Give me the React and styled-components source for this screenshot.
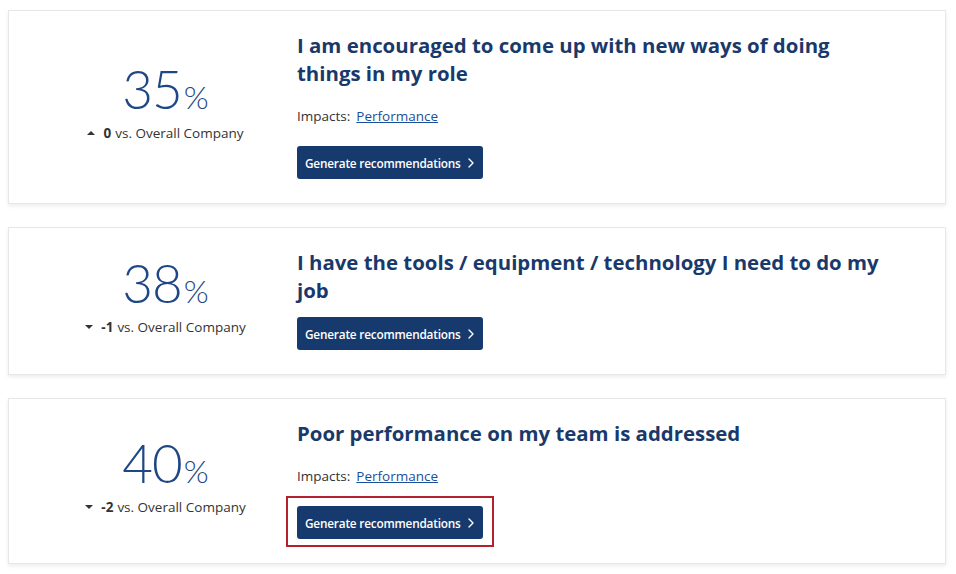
import React from "react";
import styled, { createGlobalStyle } from "styled-components";
import { ChevronRight } from "lucide-react";

const GlobalStyle = createGlobalStyle`
    body {
        margin: 0;
        background: #fff;
        font-family: "Open Sans", Lato, sans-serif;
        color: #333;
    }
`

const ListStyled = styled.div`
    display: flex;
    flex-direction: column;
    gap: 23px;
    padding: 10px 10px 10px 8px;
`

const CardStyled = styled.section`
    display: flex;
    align-items: stretch;
    padding: 20px 40px 24px 32px;
    border: 1px solid #e7e7e7;
    box-shadow: 0 2px 4px rgba(0, 0, 0, 0.08);
    background: #fff;
`

const ScoreStyled = styled.div`
    width: 249px;
    flex-shrink: 0;
    display: flex;
    flex-direction: column;
    align-items: center;
    justify-content: center;
    padding-bottom: 2px;
`

const ValueStyled = styled.div`
    color: #1f4785;
    font-family: Lato, sans-serif;
    font-weight: 300;
    font-size: 53px;
    line-height: 46px;
    letter-spacing: -1px;

    span {
        font-size: 32px;
        letter-spacing: 0;
        margin-left: 2px;
    }
`

const DeltaStyled = styled.div`
    display: flex;
    align-items: center;
    margin-top: 4px;
    font-size: 13.5px;
    line-height: 18px;
    color: #333;

    b {
        margin: 0 4px 0 8px;
        font-weight: 700;
    }
`

const Caret = styled.i`
    width: 0;
    height: 0;
    border-left: 4px solid transparent;
    border-right: 4px solid transparent;
    ${({ $up }) => $up
        ? "border-bottom: 4px solid #333;"
        : "border-top: 4px solid #333;"}
`

const BodyStyled = styled.div`
    display: flex;
    flex-direction: column;
    align-items: flex-start;
    padding-left: 7px;
    width: 590px;
`

const TitleStyled = styled.h3`
    margin: 0 0 13px;
    font-size: 20.4px;
    line-height: 28px;
    font-weight: 700;
    color: #1a396b;
`

const ImpactsStyled = styled.p`
    margin: 6px 0 20px;
    font-size: 13.5px;
    line-height: 20px;
    color: #333;

    a {
        margin-left: 6px;
        color: #1a4f9d;
        text-decoration: underline;
    }
`

const ButtonStyled = styled.button`
    position: relative;
    display: inline-flex;
    align-items: center;
    gap: 2px;
    height: 33px;
    padding: 0 4px 0 8px;
    border: none;
    border-radius: 3px;
    background: #163a6e;
    color: #fff;
    font-family: "Open Sans", sans-serif;
    font-size: 11.8px;
    letter-spacing: -0.2px;
    font-weight: 600;
    cursor: pointer;

    ${({ $focused }) => $focused && `
        &::after {
            content: "";
            position: absolute;
            inset: -10px -11px -8px -11px;
            border: 2px solid #b3202e;
        }
    `}
`

const items = [
    { score: 35, delta: 0, title: "I am encouraged to come up with new ways of doing things in my role", impacts: "Performance" },
    { score: 38, delta: -1, title: "I have the tools / equipment / technology I need to do my job" },
    { score: 40, delta: -2, title: "Poor performance on my team is addressed", impacts: "Performance", focused: true },
];

const App = () => {
    return (<>
        <GlobalStyle />
        <ListStyled>
            {items.map(item => <CardStyled key={item.title}>
                <ScoreStyled>
                    <ValueStyled>{item.score}<span>%</span></ValueStyled>
                    <DeltaStyled>
                        <Caret $up={item.delta >= 0} />
                        <b>{item.delta}</b>vs. Overall Company
                    </DeltaStyled>
                </ScoreStyled>
                <BodyStyled>
                    <TitleStyled>{item.title}</TitleStyled>
                    {item.impacts && <ImpactsStyled>Impacts:<a href="#">{item.impacts}</a></ImpactsStyled>}
                    <ButtonStyled $focused={item.focused}>
                        Generate recommendations
                        <ChevronRight size={16} strokeWidth={2} />
                    </ButtonStyled>
                </BodyStyled>
            </CardStyled>)}
        </ListStyled>
    </>)
}

export default App;
